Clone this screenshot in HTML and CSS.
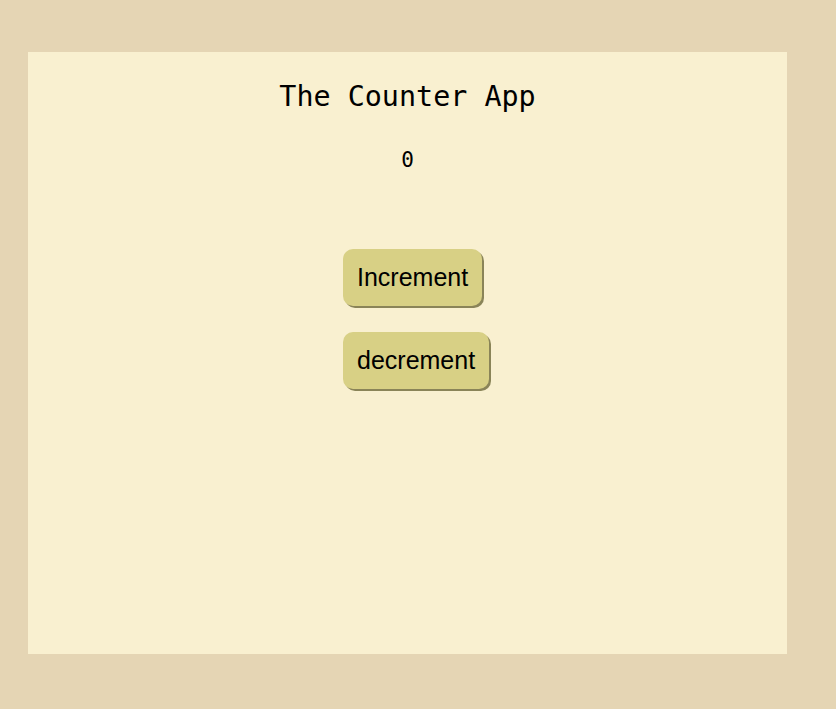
FILE: index.html
```html
<!DOCTYPE html>
<html>
<head>
<meta charset="utf-8">
<link rel="stylesheet" href="styles.css">
</head>
<body>
<div class="card">
  <h1 class="title">The Counter App</h1>
  <p class="count">0</p>
  <div class="actions">
    <button class="btn">Increment</button>
    <button class="btn">decrement</button>
  </div>
</div>
</body>
</html>
```
FILE: styles.css
```css
html, body {
  margin: 0;
  padding: 0;
  background: #e5d5b4;
}
body {
  padding-top: 52px;
  padding-left: 28px;
}
.card {
  width: 759px;
  height: 602px;
  background: #f9f0d0;
  box-sizing: border-box;
  padding-top: 28px;
  display: flex;
  flex-direction: column;
}
.title {
  margin: 0;
  font-family: "DejaVu Sans Mono", monospace;
  font-weight: normal;
  font-size: 28.4px;
  line-height: normal;
  text-align: center;
  color: #000;
}
.count {
  margin: 35px 0 0;
  font-family: "DejaVu Sans Mono", monospace;
  font-size: 21px;
  line-height: normal;
  text-align: center;
  color: #000;
}
.actions {
  margin-top: 77px;
  margin-left: 315px;
  display: flex;
  flex-direction: column;
  align-items: flex-start;
  gap: 26px;
}
.btn {
  font-family: "Liberation Sans", Arial, sans-serif;
  font-size: 25px;
  line-height: 29px;
  padding: 14px 13.5px 14px 14px;
  border: none;
  border-radius: 10px;
  background: #d8d085;
  color: #000;
  box-shadow: 2px 2px 0 #8a8458;
}
```
